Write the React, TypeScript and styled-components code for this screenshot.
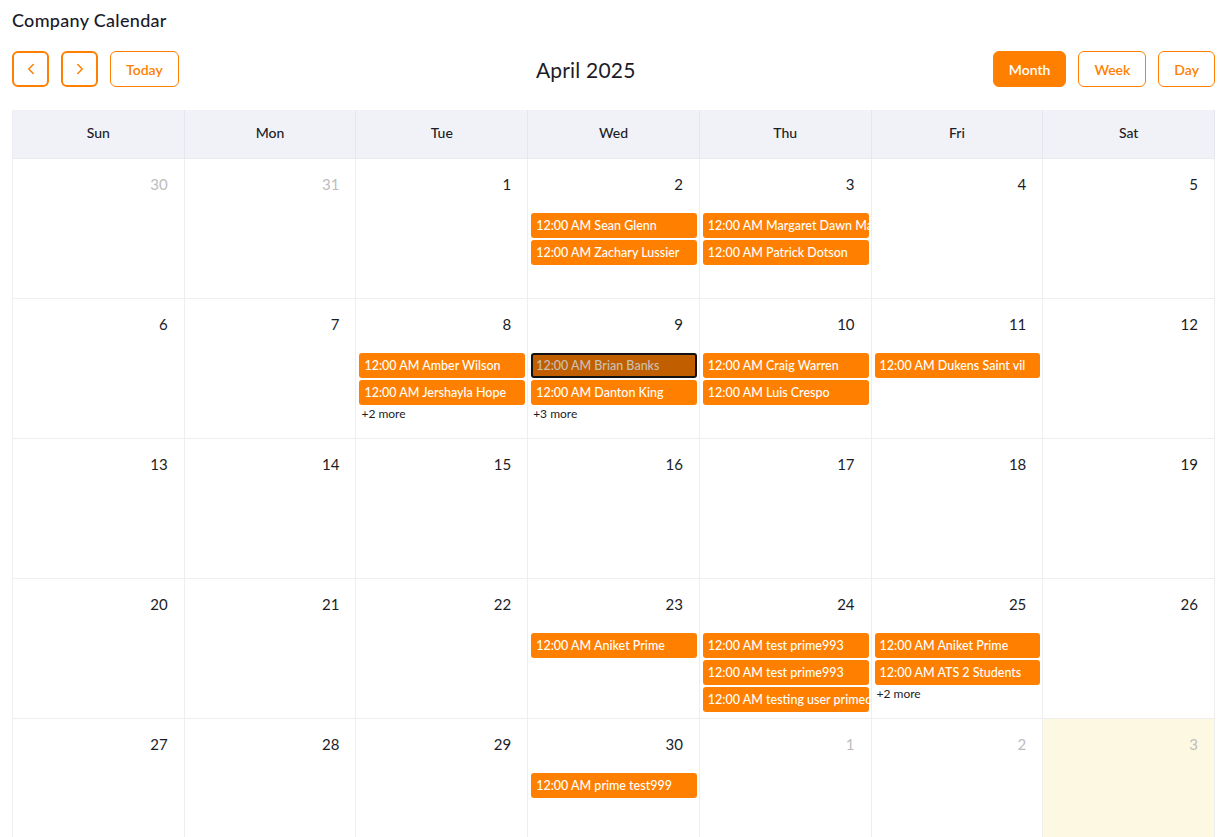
import React from 'react';
import styled, { createGlobalStyle, css } from 'styled-components';
import { ChevronLeft, ChevronRight } from 'lucide-react';

const ORANGE = '#ff7f00';

const GlobalStyle = createGlobalStyle`
  html, body {
    margin: 0;
    padding: 0;
    background: #ffffff;
    overflow: hidden;
  }
  body {
    font-family: 'Lato', 'Noto Sans', sans-serif;
    color: #1c1c28;
  }
  * { box-sizing: border-box; }
`;

const Page = styled.div`
  padding: 8px 12px 0 12px;
`;

const Title = styled.h1`
  margin: 0;
  font-size: 18px;
  line-height: 24px;
  font-weight: 500;
  letter-spacing: 0.3px;
  color: #1a1a2a;
`;

const Toolbar = styled.div`
  display: flex;
  justify-content: space-between;
  align-items: center;
  margin-top: 19px;
  height: 36px;
`;

const ButtonGroup = styled.div`
  display: flex;
  gap: 12px;
`;

const IconButton = styled.button`
  width: 37px;
  height: 36px;
  display: flex;
  align-items: center;
  justify-content: center;
  padding: 0;
  background: #fff;
  color: ${ORANGE};
  border: 2px solid ${ORANGE};
  border-radius: 6px;
`;

const TextButton = styled.button<{ $active?: boolean }>`
  height: 36px;
  padding: 0 15px;
  font-family: inherit;
  font-size: 14px;
  font-weight: 600;
  border-radius: 6px;
  border: 1px solid ${ORANGE};
  ${(p) =>
    p.$active
      ? css`
          background: ${ORANGE};
          color: #fff;
        `
      : css`
          background: #fff;
          color: ${ORANGE};
        `}
`;

const MonthLabel = styled.div`
  font-size: 21px;
  font-weight: 400;
  letter-spacing: 0.2px;
  color: #1c1c28;
`;

const Calendar = styled.div`
  margin-top: 23px;
  border-left: 1px solid #eceef2;
`;

const HeaderRow = styled.div`
  display: grid;
  grid-template-columns: repeat(7, 1fr);
  height: 49px;
  background: #f0f2f7;
  border-bottom: 1px solid #e9ebf0;
`;

const HeaderCell = styled.div`
  display: flex;
  align-items: center;
  justify-content: center;
  padding-bottom: 3px;
  font-size: 14px;
  font-weight: 500;
  color: #1c1c28;
  border-right: 1px solid #e5e7ee;
`;

const WeekRow = styled.div`
  display: grid;
  grid-template-columns: repeat(7, 1fr);
  height: 140px;
  border-bottom: 1px solid #eeeeee;
`;

const DayCell = styled.div<{ $today?: boolean }>`
  min-width: 0;
  border-right: 1px solid #eeeeee;
  background: ${(p) => (p.$today ? '#fdf8e2' : '#fff')};
  display: flex;
  flex-direction: column;
`;

const DateNum = styled.div<{ $off?: boolean }>`
  height: 54px;
  padding: 15px 16px 0 0;
  text-align: right;
  font-size: 15px;
  line-height: 20px;
  color: ${(p) => (p.$off ? '#bdbdbd' : '#1c1c28')};
`;

const EventList = styled.div`
  display: flex;
  flex-direction: column;
  gap: 2px;
  padding: 0 2px 0 3px;
`;

const EventChip = styled.div<{ $selected?: boolean }>`
  height: 25px;
  line-height: 25px;
  padding: 0 5px;
  border-radius: 3px;
  font-size: 12.5px;
  font-weight: 500;
  white-space: nowrap;
  overflow: hidden;
  ${(p) =>
    p.$selected
      ? css`
          background: #c15f00;
          color: #c9c0b6;
          border: 2px solid #111;
          line-height: 21px;
          padding: 0 3px;
        `
      : css`
          background: ${ORANGE};
          color: #fff;
        `}
`;

const MoreLink = styled.div`
  font-size: 12px;
  line-height: 14px;
  padding-left: 2px;
  color: #1c1c28;
`;

type Ev = { name: string; selected?: boolean };
type Day = { n: number; off?: boolean; today?: boolean; events?: Ev[]; more?: number };

const days: Day[] = [
  { n: 30, off: true },
  { n: 31, off: true },
  { n: 1 },
  { n: 2, events: [{ name: 'Sean Glenn' }, { name: 'Zachary Lussier' }] },
  { n: 3, events: [{ name: 'Margaret Dawn Maldonado' }, { name: 'Patrick Dotson' }] },
  { n: 4 },
  { n: 5 },
  { n: 6 },
  { n: 7 },
  { n: 8, events: [{ name: 'Amber Wilson' }, { name: 'Jershayla Hope' }], more: 2 },
  { n: 9, events: [{ name: 'Brian Banks', selected: true }, { name: 'Danton King' }], more: 3 },
  { n: 10, events: [{ name: 'Craig Warren' }, { name: 'Luis Crespo' }] },
  { n: 11, events: [{ name: 'Dukens Saint vil' }] },
  { n: 12 },
  { n: 13 },
  { n: 14 },
  { n: 15 },
  { n: 16 },
  { n: 17 },
  { n: 18 },
  { n: 19 },
  { n: 20 },
  { n: 21 },
  { n: 22 },
  { n: 23, events: [{ name: 'Aniket Prime' }] },
  {
    n: 24,
    events: [{ name: 'test prime993' }, { name: 'test prime993' }, { name: 'testing user primedemo' }],
  },
  { n: 25, events: [{ name: 'Aniket Prime' }, { name: 'ATS 2 Students' }], more: 2 },
  { n: 26 },
  { n: 27 },
  { n: 28 },
  { n: 29 },
  { n: 30, events: [{ name: 'prime test999' }] },
  { n: 1, off: true },
  { n: 2, off: true },
  { n: 3, off: true, today: true },
];

const weekdays = ['Sun', 'Mon', 'Tue', 'Wed', 'Thu', 'Fri', 'Sat'];

const weeks: Day[][] = [];
for (let i = 0; i < days.length; i += 7) weeks.push(days.slice(i, i + 7));

export default function App() {
  return (
    <Page>
      <GlobalStyle />
      <Title>Company Calendar</Title>
      <Toolbar>
        <ButtonGroup>
          <IconButton aria-label="previous">
            <ChevronLeft size={18} strokeWidth={2} />
          </IconButton>
          <IconButton aria-label="next">
            <ChevronRight size={18} strokeWidth={2} />
          </IconButton>
          <TextButton>Today</TextButton>
        </ButtonGroup>
        <MonthLabel>April 2025</MonthLabel>
        <ButtonGroup>
          <TextButton $active>Month</TextButton>
          <TextButton>Week</TextButton>
          <TextButton>Day</TextButton>
        </ButtonGroup>
      </Toolbar>
      <Calendar>
        <HeaderRow>
          {weekdays.map((d) => (
            <HeaderCell key={d}>{d}</HeaderCell>
          ))}
        </HeaderRow>
        {weeks.map((week, wi) => (
          <WeekRow key={wi}>
            {week.map((day, di) => (
              <DayCell key={di} $today={day.today}>
                <DateNum $off={day.off}>{day.n}</DateNum>
                {day.events && (
                  <EventList>
                    {day.events.map((ev, ei) => (
                      <EventChip key={ei} $selected={ev.selected}>
                        12:00 AM {ev.name}
                      </EventChip>
                    ))}
                    {day.more && <MoreLink>+{day.more} more</MoreLink>}
                  </EventList>
                )}
              </DayCell>
            ))}
          </WeekRow>
        ))}
      </Calendar>
    </Page>
  );
}
